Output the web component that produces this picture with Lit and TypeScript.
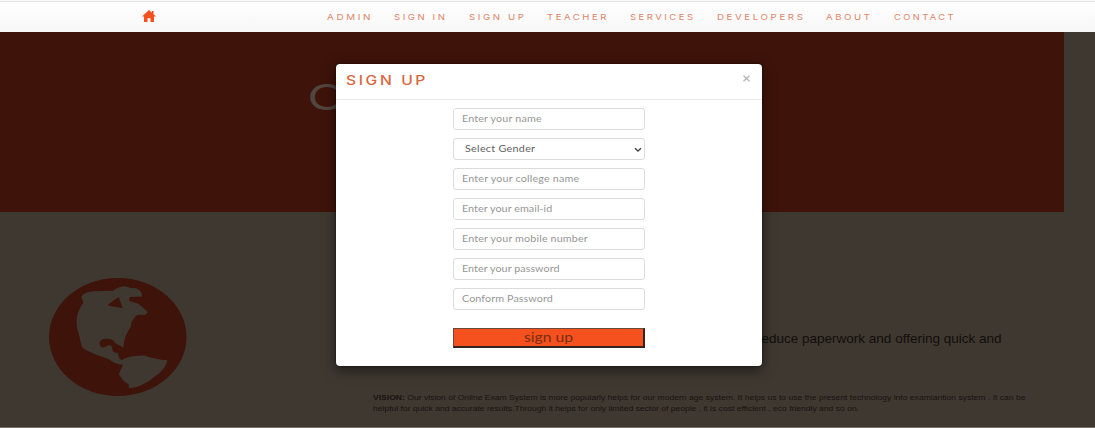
import { LitElement, html, css, svg } from "lit";
import { customElement, property } from "lit/decorators.js";

/** One line of text fitted to an exact width. */
@customElement("fit-text")
class FitText extends LitElement {
  @property() text = "";
  @property() lead = "";
  @property({ type: Number }) width = 0;
  @property({ type: Number }) height = 12;
  @property({ type: Number }) base = 9;
  static styles = css`
    :host { display: block; flex: none; }
    svg { display: block; overflow: visible; fill: currentColor; }
    .lead { font-weight: 700; }
  `;
  render() {
    return html`<svg width=${this.width} height=${this.height}>
      <text x="0" y=${this.base} textLength=${this.width} lengthAdjust="spacingAndGlyphs">${this.lead ? svg`<tspan class="lead">${this.lead} </tspan>` : null}${this.text}</text>
    </svg>`;
  }
}

@customElement("sign-up-dialog")
class SignUpDialog extends LitElement {
  static styles = css`
    :host { display: block; box-sizing: border-box; background: #fff; border-radius: 4px; box-shadow: 0 4px 13px rgba(0,0,0,.55), 0 0 2px rgba(0,0,0,.6); }
    header { display: flex; justify-content: space-between; height: 36px; box-sizing: border-box; border-bottom: 1px solid #eaeaea; padding: 8px 12px 0 10.5px; }
    .title { color: #d9663d; font: 500 12.6px Inter, sans-serif; letter-spacing: 2.1px; }
    .close { width: 7px; height: 7px; margin-top: 3px; display: block; }
    form { display: flex; flex-direction: column; width: 192px; margin: 8px 0 0 117px; }
    .field { position: relative; height: 22px; margin-bottom: 8.05px; box-sizing: border-box; border: 1px solid #dcdcdc; border-radius: 3px; background: #fff; overflow: hidden; }
    input, select { appearance: none; display: block; border: 0; outline: 0; padding: 0; margin: 0 0 0 8.5px; width: 150px; height: 20px; background: transparent; font: 9.2px Lato, sans-serif; transform: scaleX(1.17); transform-origin: left; }
    input::placeholder { color: #969696; opacity: 1; }
    select { color: #606060; margin-left: 11px; }
    .chevron { position: absolute; right: 2px; top: 8px; }
    button { display: flex; justify-content: center; align-items: center; height: 20px; margin-top: 10px; padding: 0; background: #f4511e; border: 2px solid; border-color: #6b4a3c #35241e #35241e #6b4a3c; border-width: 1.5px 2px 2px 1.5px; border-radius: 0; color: #7a2d13; font: 13px Lato, sans-serif; }
  `;
  private field(text: string, spacing: number, type = "text") {
    return html`<div class="field"><input type=${type} placeholder=${text} style="letter-spacing:${spacing}px" /></div>`;
  }
  render() {
    return html`
      <header>
        <fit-text class="title" text="SIGN UP" .width=${82} .height=${18} .base=${13.2}></fit-text>
        <svg class="close" viewBox="0 0 7 7"><path d="M.5 .8 6.5 6.2M6.5 .8 .5 6.2" stroke="#b5b5b5" stroke-width="1.3" /></svg>
      </header>
      <form>
        ${this.field("Enter your name", 0.13)}
        <div class="field">
          <select style="letter-spacing:.25px"><option>Select Gender</option></select>
          <svg class="chevron" width="8" height="6" viewBox="0 0 8 6"><path d="M1 1.3 4 4 7 1.3" fill="none" stroke="#444" stroke-width="1.4" /></svg>
        </div>
        ${this.field("Enter your college name", 0.15)}
        ${this.field("Enter your email-id", 0.05)}
        ${this.field("Enter your mobile number", 0.12)}
        ${this.field("Enter your password", 0.05, "password")}
        ${this.field("Conform Password", 0.08, "password")}
        <button type="button"><fit-text text="sign up" .width=${49} .height=${16} .base=${12.8}></fit-text></button>
      </form>`;
  }
}

@customElement("app-root")
class AppRoot extends LitElement {
  static styles = css`
    :host { display: block; position: relative; width: 1095px; height: 428px; box-sizing: border-box; overflow: hidden; background: #3f3831; border-bottom: 1px solid #77716c; }
    .bar { display: flex; height: 32px; box-sizing: border-box; border-top: 1px solid #fafafa; background: linear-gradient(#e7e7e7 0 1px, #fff 1px, #f7f7f7); }
    .home { display: block; width: 14px; height: 12px; margin: 9px 178.5px 0 141.5px; flex: none; fill: #f4511e; }
    nav { display: flex; width: 628.5px; justify-content: space-between; padding-top: 10px; color: #df8567; font: 400 7.9px Inter, sans-serif; letter-spacing: 2.1px; margin-left: -7px; }
    .hero { width: 1064px; height: 180px; box-sizing: border-box; padding: 45px 0 0 308px; background: #3e1309; color: #51453f; font: 400 37.5px Lato, sans-serif; }
    .about { display: flex; padding-top: 66px; }
    .globe { display: block; width: 137.5px; height: 118px; margin-left: 49px; flex: none; }
    .copy { margin: 52px 0 0 186.5px; color: #17130f; font: 8px "Liberation Sans", sans-serif; }
    .lead { font-size: 13.5px; margin: 0 0 44px 383.5px; color: #110e0b; }
    sign-up-dialog { position: absolute; left: 335.5px; top: 63.5px; width: 426.5px; height: 302px; }
  `;
  private links: [string, number][] = [
    ["ADMIN", 46], ["SIGN IN", 53.5], ["SIGN UP", 57.5], ["TEACHER", 62],
    ["SERVICES", 65.5], ["DEVELOPERS", 88.5], ["ABOUT", 46.5], ["CONTACT", 62],
  ];
  render() {
    return html`
      <div class="bar">
        <svg class="home" viewBox="0 0 14 12"><path d="M7 0 14 6.500H12V12H8.500V8.200H5.500V12H2V6.500H0ZM9.800 1H11.500V5L9.800 3.400Z" /></svg>
        <nav>${this.links.map(([t, w]) => html`<fit-text text=${t} .width=${w} .base=${8.8}></fit-text>`)}</nav>
      </div>
      <div class="hero"><fit-text text="O" .width=${38} .height=${36} .base=${33}></fit-text></div>
      <div class="about">
        <svg class="globe" viewBox="57 54 412 353" preserveAspectRatio="none">
          <ellipse cx="263" cy="230.500" rx="206" ry="176.500" fill="#3e1309" />
          <path fill="#3f3831" d="M154 110C164 98 176 95 194 94L249 92C259 87 270 77 286 79L304 85C322 81 336 93 336 109L299 111 297 122 326 132 353 156 346 164 322 164C307 178 303 186 303 199C291 216 282 231 280 262L264 254 254 248C251 238 237 234 218 237C205 241 207 255 216 262C224 263 229 254 241 255C249 259 244 270 252 276L264 279 267 294 275 300C294 288 318 286 343 286C363 293 388 299 412 300C406 320 397 333 374 349C353 366 329 382 297 384L295 371C283 367 276 356 266 343L279 313C258 313 249 305 236 297C206 286 178 278 157 262C151 248 150 233 145 218C136 187 137 159 160 127Z" />
          <path fill="#3e1309" d="M234 133 253 120 266 111 278 144 236 137Z" />
        </svg>
        <div class="copy">
          <fit-text class="lead" text="reduce paperwork and offering quick and" .width=${244.5} .height=${16} .base=${13}></fit-text>
          <fit-text lead="VISION:" text="Our vision of Online Exam System is more popularly helps for our modern age system. It helps us to use the present technology into examiantion system . It can be" .width=${652.5} .height=${10.5} .base=${10}></fit-text>
          <fit-text text="helpful for quick and accurate results.Through it helps for only limited sector of people , it is cost efficient , eco friendly and so on." .width=${486} .height=${10.5} .base=${9.5}></fit-text>
        </div>
      </div>
      <sign-up-dialog></sign-up-dialog>`;
  }
}
